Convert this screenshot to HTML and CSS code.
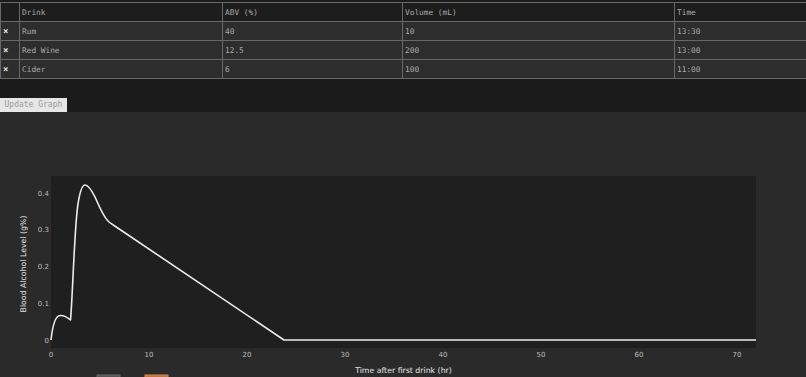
FILE: index.html
```html
<!DOCTYPE html>
<html>
<head>
<meta charset="utf-8">
<link rel="stylesheet" href="styles.css">
</head>
<body>
<div class="top">
  <table class="drinks">
    <colgroup>
      <col class="c-del"><col class="c-drink"><col class="c-abv"><col class="c-vol"><col class="c-time">
    </colgroup>
    <thead>
      <tr><th></th><th>Drink</th><th>ABV (%)</th><th>Volume (mL)</th><th>Time</th></tr>
    </thead>
    <tbody>
      <tr><td class="del">×</td><td>Rum</td><td>40</td><td>10</td><td>13:30</td></tr>
      <tr><td class="del">×</td><td>Red Wine</td><td>12.5</td><td>200</td><td>13:00</td></tr>
      <tr><td class="del">×</td><td>Cider</td><td>6</td><td>100</td><td>11:00</td></tr>
    </tbody>
  </table>
  <div class="controls">
    <button class="update">Update Graph</button>
  </div>
</div>
<div class="chart">
  <svg class="plot" width="806" height="265" viewBox="0 112 806 265">
    <rect x="51" y="176" width="705" height="172" fill="#1f1f1f"/>
    <g class="ytick" text-anchor="end">
      <text x="49" y="342.5">0</text>
      <text x="49" y="305.5">0.1</text>
      <text x="49" y="268.5">0.2</text>
      <text x="49" y="232">0.3</text>
      <text x="49" y="195.5">0.4</text>
    </g>
    <g class="xtick" text-anchor="middle">
      <text x="51" y="356.5">0</text>
      <text x="149" y="356.5">10</text>
      <text x="247" y="356.5">20</text>
      <text x="345" y="356.5">30</text>
      <text x="443" y="356.5">40</text>
      <text x="541" y="356.5">50</text>
      <text x="639" y="356.5">60</text>
      <text x="737" y="356.5">70</text>
    </g>
    <text class="axtitle" x="403.5" y="372.5" text-anchor="middle">Time after first drink (hr)</text>
    <text class="axtitle" transform="translate(25.5,264) rotate(-90)" text-anchor="middle">Blood Alcohol Level (g%)</text>
    <path d="M51,340 C52.5,326 55,316 60,315.5 C64,315 67,317 70.5,320 C72.5,300 74.5,225 78,204 C80,191 82,185 85,185 C88,185 91,189 95,197 C99,206 103,216 108,221 C110,223 112,224 114,225.5 L284,340 L756,340" fill="none" stroke="#ececec" stroke-width="1.6" stroke-linejoin="round"/>
    <rect x="97" y="375" width="23" height="10" fill="#565656" stroke="#6a6a6a" stroke-width="1"/>
    <rect x="145" y="375" width="23" height="10" fill="#c0763a" stroke="#d48a4c" stroke-width="1"/>
  </svg>
</div>
</body>
</html>
```
FILE: styles.css
```css
html, body {
  margin: 0;
  padding: 0;
  overflow: hidden;
}
body {
  background: #2a2a2a;
  width: 806px;
  height: 377px;
}
.top {
  background: #1b1b1b;
  padding-top: 2px;
  display: flex;
  flex-direction: column;
  overflow: hidden;
}
.drinks {
  border-collapse: collapse;
  width: 812px;
  table-layout: fixed;
  font-family: "DejaVu Sans Mono", "Liberation Mono", monospace;
  font-size: 7.8px;
  color: #a9a9a9;
}
.c-del { width: 19px; }
.c-drink { width: 203px; }
.c-abv { width: 180px; }
.c-vol { width: 272px; }
.c-time { width: 138px; }
.drinks th,
.drinks td {
  border: 1px solid #686868;
  height: 18px;
  padding: 0 2px;
  text-align: left;
  font-weight: normal;
  white-space: nowrap;
}
.drinks thead th {
  background: #1d1d1d;
}
.drinks tbody td {
  background: #2d2d2d;
}
.drinks td.del {
  color: #e6e6e6;
  font-weight: bold;
  font-size: 9px;
  padding: 0 0 0 2px;
}
.controls {
  display: flex;
  padding-top: 19px;
}
.update {
  margin: 0;
  height: 14px;
  padding: 0 4.5px;
  border: none;
  border-radius: 0;
  background: #e6e6e6;
  color: #9a9a9a;
  font-family: "DejaVu Sans Mono", "Liberation Mono", monospace;
  font-size: 8px;
  line-height: 14px;
}
.chart {
  background: #2a2a2a;
  display: flex;
}
.plot {
  display: block;
}
.ytick text,
.xtick text {
  font-family: "DejaVu Sans", Verdana, sans-serif;
  font-size: 7px;
  fill: #bdbdbd;
}
.axtitle {
  font-family: "DejaVu Sans", Verdana, sans-serif;
  font-size: 7.8px;
  fill: #e6e6e6;
}
```
